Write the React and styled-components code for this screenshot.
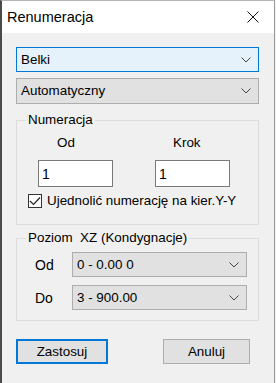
import React from "react";
import styled, { createGlobalStyle } from "styled-components";

const Global = createGlobalStyle`
  html, body { margin: 0; padding: 0; background: #f0f0f0; }
  body { font-family: "Liberation Sans", Arial, sans-serif; font-size: 13.4px; color: #000; }
  * { box-sizing: border-box; }
`;

const Window = styled.div`
  width: 275px;
  height: 383px;
  background: #f0f0f0;
  border-left: 2px solid #4a4a4a;
  border-right: 1px solid #9a9a9a;
  border-top: 1px solid #b5b5b5;
  display: flex;
  flex-direction: column;
`;

const TitleBar = styled.div`
  height: 32px;
  background: #fff;
  display: flex;
  align-items: center;
  justify-content: space-between;
  padding: 0 15px 0 5px;
`;

const Title = styled.span`
  font-size: 14.5px;
  color: #000;
`;

const Body = styled.div`
  display: flex;
  flex-direction: column;
  padding: 14px 15px 0 14px;
`;

const ComboBox = styled.div`
  height: ${(p) => p.$h || 25}px;
  width: ${(p) => (p.$w ? `${p.$w}px` : "100%")};
  margin-top: ${(p) => p.$mt || 0}px;
  background: ${(p) => (p.$focus ? "#e5f1fb" : "#e1e1e1")};
  border: 1px solid ${(p) => (p.$focus ? "#0078d7" : "#adadad")};
  display: flex;
  align-items: center;
  justify-content: space-between;
  padding: 0 7px 0 4px;
  line-height: 16px;
`;

const Chevron = () => (
  <svg width="10" height="6" viewBox="0 0 10 6">
    <polyline points="0.5,0.5 5,5 9.5,0.5" fill="none" stroke="#444" strokeWidth="1" />
  </svg>
);

const Group = styled.fieldset`
  margin: ${(p) => p.$mt}px 0 0 0;
  padding: ${(p) => p.$pt}px 0 ${(p) => p.$pb}px 0;
  border: 1px solid #dcdcdc;
  min-width: 0;
`;

const Legend = styled.legend`
  margin-left: 9px;
  padding: 0 2px;
  line-height: 16px;
`;

const FieldGrid = styled.div`
  display: grid;
  grid-template-columns: 75px 75px;
  column-gap: 42px;
  row-gap: 9px;
  padding-left: 21px;
`;

const FieldLabel = styled.div`
  line-height: 16px;
  padding-left: ${(p) => p.$indent}px;
`;

const TextInput = styled.div`
  height: 27px;
  background: #fff;
  border: 1px solid #7a7a7a;
  display: flex;
  align-items: center;
  padding-left: 3px;
  font-size: 14px;
`;

const CheckRow = styled.div`
  display: flex;
  align-items: center;
  gap: 5px;
  margin-top: 6px;
  padding-left: 11px;
  line-height: 16px;
`;

const Box = styled.div`
  width: 14px;
  height: 14px;
  border: 1px solid #333;
  background: #fff;
  display: flex;
  align-items: center;
  justify-content: center;
`;

const LevelGrid = styled.div`
  display: grid;
  grid-template-columns: 37px 175px;
  row-gap: 8px;
  padding-left: 18px;
  align-items: center;
`;

const LevelLabel = styled.div`
  font-size: 14px;
  line-height: 16px;
`;

const ButtonRow = styled.div`
  display: flex;
  gap: 55px;
  margin-top: 18px;
`;

const Button = styled.div`
  width: ${(p) => p.$w}px;
  height: 25px;
  background: #e1e1e1;
  border: ${(p) => (p.$default ? "2px solid #0078d7" : "1px solid #adadad")};
  display: flex;
  align-items: center;
  justify-content: center;
`;

export default function App() {
  return (
    <>
      <Global />
      <Window>
        <TitleBar>
          <Title>Renumeracja</Title>
          <svg width="12" height="12" viewBox="0 0 12 12">
            <path d="M0.5 0.5 L11.5 11.5 M11.5 0.5 L0.5 11.5" stroke="#111" strokeWidth="1" fill="none" />
          </svg>
        </TitleBar>
        <Body>
          <ComboBox $focus>
            <span>Belki</span>
            <Chevron />
          </ComboBox>
          <ComboBox $h={26} $mt={6}>
            <span>Automatyczny</span>
            <Chevron />
          </ComboBox>

          <Group $mt={8} $pt={7} $pb={15}>
            <Legend>Numeracja</Legend>
            <FieldGrid>
              <FieldLabel $indent={19}>Od</FieldLabel>
              <FieldLabel $indent={18}>Krok</FieldLabel>
              <TextInput>1</TextInput>
              <TextInput>1</TextInput>
            </FieldGrid>
            <CheckRow>
              <Box>
                <svg width="12" height="10" viewBox="0 0 12 10">
                  <polyline points="1,5 4.5,8.5 11,1.5" fill="none" stroke="#222" strokeWidth="1.2" />
                </svg>
              </Box>
              <span>Ujednolić numerację na kier.Y-Y</span>
            </CheckRow>
          </Group>

          <Group $mt={5} $pt={6} $pb={10}>
            <Legend>Poziom&nbsp; XZ (Kondygnacje)</Legend>
            <LevelGrid>
              <LevelLabel>Od</LevelLabel>
              <ComboBox $w={175}>
                <span>0 - 0.00 0</span>
                <Chevron />
              </ComboBox>
              <LevelLabel>Do</LevelLabel>
              <ComboBox $w={175}>
                <span>3 - 900.00</span>
                <Chevron />
              </ComboBox>
            </LevelGrid>
          </Group>

          <ButtonRow>
            <Button $w={92} $default>Zastosuj</Button>
            <Button $w={87}>Anuluj</Button>
          </ButtonRow>
        </Body>
      </Window>
    </>
  );
}
